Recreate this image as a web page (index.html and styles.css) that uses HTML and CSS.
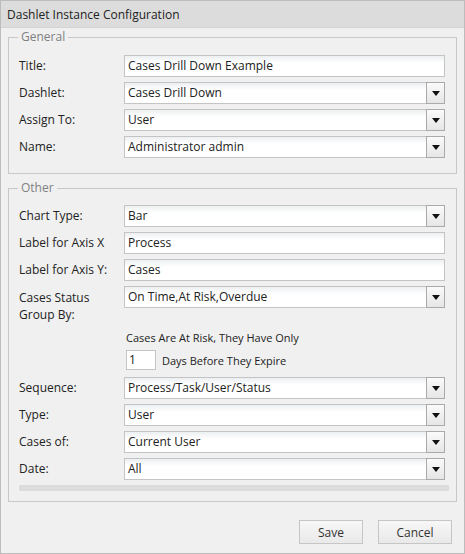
FILE: index.html
```html
<!DOCTYPE html>
<html>
<head>
<meta charset="utf-8">
<link rel="stylesheet" href="styles.css">
</head>
<body>
<div class="dialog">
  <div class="titlebar">Dashlet Instance Configuration</div>
  <div class="content">
    <fieldset class="group">
      <legend>General</legend>
      <div class="form">
        <label class="lbl">Title:</label>
        <div class="input">Cases Drill Down Example</div>
        <label class="lbl">Dashlet:</label>
        <div class="input select"><span class="val">Cases Drill Down</span><span class="arrow"><svg width="8" height="5" viewBox="0 0 8 5"><path d="M0 0H8L4 5Z" fill="#111"/></svg></span></div>
        <label class="lbl">Assign To:</label>
        <div class="input select"><span class="val">User</span><span class="arrow"><svg width="8" height="5" viewBox="0 0 8 5"><path d="M0 0H8L4 5Z" fill="#111"/></svg></span></div>
        <label class="lbl">Name:</label>
        <div class="input select"><span class="val">Administrator admin</span><span class="arrow"><svg width="8" height="5" viewBox="0 0 8 5"><path d="M0 0H8L4 5Z" fill="#111"/></svg></span></div>
      </div>
    </fieldset>
    <fieldset class="group other">
      <legend>Other</legend>
      <div class="form">
        <label class="lbl">Chart Type:</label>
        <div class="input select"><span class="val">Bar</span><span class="arrow"><svg width="8" height="5" viewBox="0 0 8 5"><path d="M0 0H8L4 5Z" fill="#111"/></svg></span></div>
        <label class="lbl">Label for Axis X</label>
        <div class="input">Process</div>
        <label class="lbl">Label for Axis Y:</label>
        <div class="input">Cases</div>
        <label class="lbl two">Cases Status<br>Group By:</label>
        <div class="input select"><span class="val">On Time,At Risk,Overdue</span><span class="arrow"><svg width="8" height="5" viewBox="0 0 8 5"><path d="M0 0H8L4 5Z" fill="#111"/></svg></span></div>
        <div class="risk">
          <div class="note">Cases Are At Risk, They Have Only</div>
          <div class="days"><div class="small">1</div><span>Days Before They Expire</span></div>
        </div>
        <label class="lbl">Sequence:</label>
        <div class="input select"><span class="val">Process/Task/User/Status</span><span class="arrow"><svg width="8" height="5" viewBox="0 0 8 5"><path d="M0 0H8L4 5Z" fill="#111"/></svg></span></div>
        <label class="lbl">Type:</label>
        <div class="input select"><span class="val">User</span><span class="arrow"><svg width="8" height="5" viewBox="0 0 8 5"><path d="M0 0H8L4 5Z" fill="#111"/></svg></span></div>
        <label class="lbl">Cases of:</label>
        <div class="input select"><span class="val">Current User</span><span class="arrow"><svg width="8" height="5" viewBox="0 0 8 5"><path d="M0 0H8L4 5Z" fill="#111"/></svg></span></div>
        <label class="lbl">Date:</label>
        <div class="input select"><span class="val">All</span><span class="arrow"><svg width="8" height="5" viewBox="0 0 8 5"><path d="M0 0H8L4 5Z" fill="#111"/></svg></span></div>
        <div class="bar"></div>
      </div>
    </fieldset>
    <div class="buttons">
      <button class="btn save">Save</button>
      <button class="btn cancel">Cancel</button>
    </div>
  </div>
</div>
</body>
</html>
```
FILE: styles.css
```css
* { box-sizing: border-box; }
html, body { margin: 0; padding: 0; background: #fff; }
body {
  font-family: "Open Sans", "Noto Sans", sans-serif;
  font-size: 12px;
  color: #222;
}
.dialog {
  width: 465px;
  height: 554px;
  border: 1px solid #bcbcbc;
  background: #f0f0f0;
  display: flex;
  flex-direction: column;
}
.titlebar {
  height: 27px;
  background: #dcdcdc;
  line-height: 27px;
  padding-left: 6px;
  color: #222;
  border-bottom: 1px solid #d4d4d4;
}
.content {
  flex: 1;
  padding: 1px 7px 0 7px;
  display: flex;
  flex-direction: column;
}
.group {
  margin: 0;
  border: 1px solid #c8c8c8;
  padding: 10px 11px 15px 10px;
  min-width: 0;
}
.group legend {
  padding: 0 3px;
  margin-left: -1px;
  color: #808080;
  line-height: 16px;
  height: 16px;
}
.group.other {
  margin-top: 6px;
  padding-top: 9px;
  padding-bottom: 10px;
}
.form {
  display: grid;
  grid-template-columns: 105px 1fr;
  row-gap: 5px;
}
.lbl {
  line-height: 22px;
  color: #222;
}
.lbl.two {
  line-height: 17px;
  padding-top: 3px;
  height: 37px;
}
.input {
  height: 22px;
  border: 1px solid #c4c4c4;
  background: linear-gradient(#eceff1, #fff 7px);
  line-height: 20px;
  padding-left: 3px;
  color: #222;
  white-space: nowrap;
}
.select {
  display: flex;
  padding-right: 0;
}
.select .val { flex: 1; }
.arrow {
  width: 19px;
  height: 22px;
  margin: -1px -1px 0 0;
  border: 1px solid #aaa;
  background: linear-gradient(#fafafa, #e6e6e6);
  display: flex;
  align-items: center;
  justify-content: center;
}
.arrow svg { display: block; margin-top: 1px; }
.risk {
  grid-column: 2;
  margin-top: 1px;
  margin-left: 2px;
  font-size: 11px;
}
.note { line-height: 17px; }
.days {
  display: flex;
  align-items: center;
  margin-top: 4px;
  margin-bottom: 2px;
}
.small {
  width: 30px;
  height: 20px;
  border: 1px solid #c4c4c4;
  background: #fff;
  line-height: 18px;
  padding-left: 2px;
  margin-right: 6px;
  font-size: 12px;
}
.bar {
  grid-column: 1 / 3;
  height: 6px;
  background: #dcdcdc;
  margin-right: -4px;
}
.buttons {
  display: flex;
  justify-content: flex-end;
  gap: 15px;
  margin-top: 18px;
  padding-right: 5px;
}
.btn {
  font-family: inherit;
  font-size: 12px;
  color: #333;
  height: 24px;
  border: 1px solid #c6c6c6;
  background: linear-gradient(#f7f7f7, #e9e9e9);
  padding: 0;
  border-radius: 0;
}
.save { width: 64px; }
.cancel { width: 74px; }
```
